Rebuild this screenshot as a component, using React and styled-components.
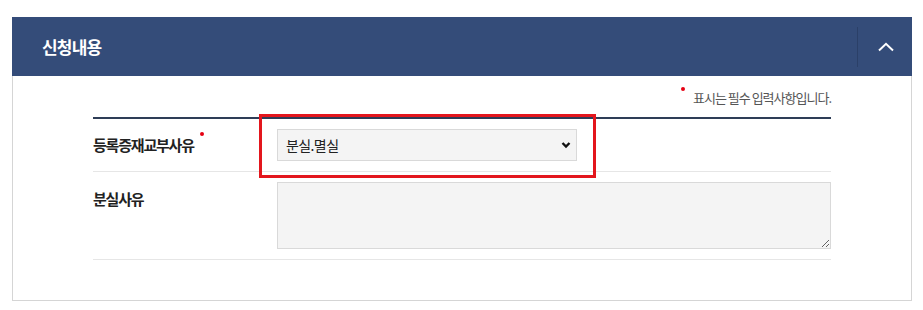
import React from 'react'
import styled, { createGlobalStyle } from 'styled-components';

const GlobalStyle = createGlobalStyle`
  body {
    margin: 0;
    background: #fff;
    font-family: "Noto Sans CJK KR", "Noto Sans", sans-serif;
  }
`;

const Page = styled.div`
  padding: 17px 11px 0 12px;
`;

const Panel = styled.section`
  width: 900px;
`;

const Header = styled.div`
  height: 59px;
  background-color: #344c79;
  display: flex;
  align-items: center;
  justify-content: space-between;
  padding-left: 30px;
  box-sizing: border-box;
`;

const Title = styled.h2`
  margin: 0;
  color: #fff;
  font-size: 17px;
  font-weight: 700;
  letter-spacing: -0.8px;
`;

const Toggle = styled.button`
  width: 55px;
  height: 40px;
  border: 0;
  border-left: 1px solid #2b4068;
  background: transparent;
  display: flex;
  align-items: center;
  justify-content: center;
  padding: 0 0 0 2px;
  cursor: pointer;
`;

const Body = styled.div`
  border: 1px solid #d5d5d5;
  border-top: 0;
  padding: 8px 80px 40px 80px;
`;

const Note = styled.p`
  margin: 0;
  height: 33px;
  text-align: right;
  font-size: 13px;
  color: #555;
  letter-spacing: -1px;
  line-height: 28px;
`;

const Dot = styled.span`
  display: inline-block;
  width: 4px;
  height: 4px;
  border-radius: 50%;
  background: #e60012;
  vertical-align: top;
  margin: ${({ $label }) => ($label ? '2px 0 0 6px' : '3px 8px 0 0')};
`;

const Form = styled.div`
  border-top: 2px solid #2e3d57;
`;

const Row = styled.div`
  display: flex;
  align-items: ${({ $top }) => ($top ? 'flex-start' : 'center')};
  padding: 10px 0;
  border-bottom: 1px solid #e6e6e6;
`;

const Label = styled.div`
  width: 184px;
  flex-shrink: 0;
  font-size: 15px;
  font-weight: 700;
  color: #222;
  letter-spacing: -1.2px;
  line-height: ${({ $top }) => ($top ? '34px' : '30px')};
`;

const Highlight = styled.div`
  margin: -15px 0 -17px -18px;
  padding: 12px 16px 14px 15px;
  border: 3px solid #e3161d;
`;

const SelectBox = styled.div`
  position: relative;
  width: 300px;
  height: 32px;
`;

const Select = styled.select`
  appearance: none;
  width: 100%;
  height: 100%;
  box-sizing: border-box;
  border: 1px solid #d9d9d9;
  background: #f4f4f4;
  padding: 0 30px 0 8px;
  font-family: inherit;
  font-size: 14px;
  color: #222;
  letter-spacing: -0.6px;
  outline: none;
`;

const Caret = styled.svg`
  position: absolute;
  right: 5px;
  top: 10px;
  pointer-events: none;
`;

const TextArea = styled.textarea`
  width: 554px;
  height: 67px;
  box-sizing: border-box;
  border: 1px solid #d9d9d9;
  background: #f4f4f4;
  font-family: inherit;
  outline: none;
  resize: vertical;
  display: block;
`;

export default function App() {
  return (
    <>
      <GlobalStyle />
      <Page>
        <Panel>
          <Header>
            <Title>신청내용</Title>
            <Toggle aria-label="접기">
              <svg width="18" height="10" viewBox="0 0 18 10">
                <path d="M2 8.5 L9 1.8 L16 8.5" fill="none" stroke="#fff" strokeWidth="2" />
              </svg>
            </Toggle>
          </Header>
          <Body>
            <Note><Dot />표시는 필수 입력사항입니다.</Note>
            <Form>
              <Row>
                <Label>등록증재교부사유<Dot $label /></Label>
                <Highlight>
                  <SelectBox>
                    <Select defaultValue="lost">
                      <option value="lost">분실.멸실</option>
                      <option value="damage">훼손</option>
                      <option value="change">기재사항 변경</option>
                    </Select>
                    <Caret width="12" height="12" viewBox="0 0 12 12">
                      <path d="M2.5 4 L6 7.5 L9.5 4" fill="none" stroke="#111" strokeWidth="2.4" />
                    </Caret>
                  </SelectBox>
                </Highlight>
              </Row>
              <Row $top>
                <Label $top>분실사유</Label>
                <TextArea />
              </Row>
            </Form>
          </Body>
        </Panel>
      </Page>
    </>
  );
}
